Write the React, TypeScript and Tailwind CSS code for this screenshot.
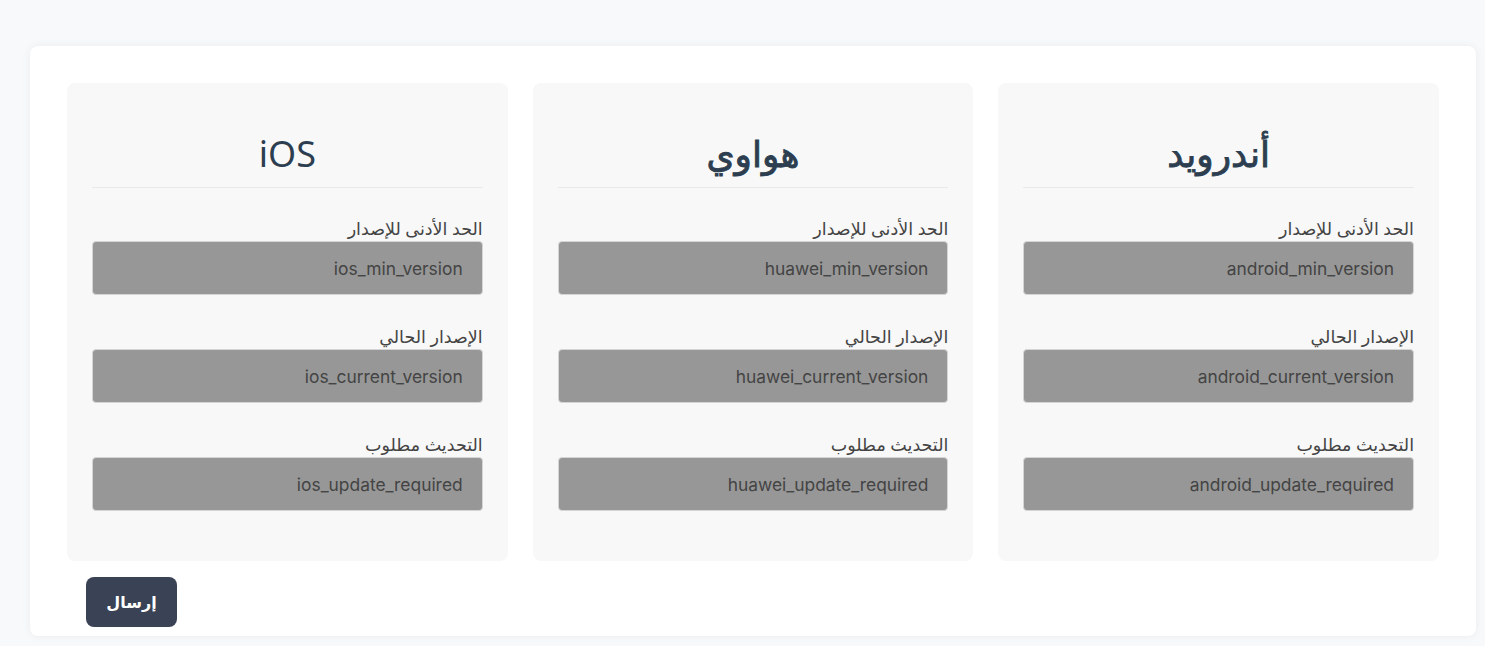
const platforms = [
  { title: "أندرويد", key: "android", latin: false },
  { title: "هواوي", key: "huawei", latin: false },
  { title: "iOS", key: "ios", latin: true },
];

const fields = [
  { label: "الحد الأدنى للإصدار", suffix: "min_version" },
  { label: "الإصدار الحالي", suffix: "current_version" },
  { label: "التحديث مطلوب", suffix: "update_required" },
];

function PlatformColumn({
  title,
  keyName,
  latin,
}: {
  title: string;
  keyName: string;
  latin: boolean;
}) {
  return (
    <div className="rounded-lg bg-[#f8f8f8] px-[25px] pt-[25px] pb-[50px]">
      <div className="border-b border-[#e9e9e9] pb-[4px] text-center">
        <h2
          className={`h-[75px] pt-[16px] text-[36px] leading-[60px] font-normal text-[#2c3e50] ${
            latin ? "" : "[-webkit-text-stroke:0.9px_#2c3e50]"
          }`}
        >
          {title}
        </h2>
      </div>
      <div className="mt-[29px] flex flex-col gap-[30px]">
        {fields.map((f) => (
          <div key={f.suffix} className="flex flex-col">
            <label className="h-[24px] text-[17.5px] font-medium leading-[22px] text-[#444]">
              {f.label}
            </label>
            <input
              readOnly
              value={`${keyName}_${f.suffix}`}
              className="h-[54px] w-full rounded border border-[#d5d5d5] bg-[#979797] px-[19px] text-right text-[17.4px] text-[#444] outline-none [font-family:Inter,sans-serif]"
            />
          </div>
        ))}
      </div>
    </div>
  );
}

export default function App() {
  return (
    <div
      dir="rtl"
      className="min-h-[646px] bg-[#f8f9fb] pt-[46px] pr-[9px] pl-[30px] [font-family:'Noto_Sans','DejaVu_Sans',sans-serif]"
    >
      <div className="rounded-lg bg-white px-[37px] pt-[37px] pb-[9px] shadow-[0_0_10px_rgba(0,0,0,0.06)]">
        <div className="grid grid-cols-3 gap-[25px]">
          {platforms.map((p) => (
            <PlatformColumn key={p.key} title={p.title} keyName={p.key} latin={p.latin} />
          ))}
        </div>
        <div className="mt-[16px] flex justify-end pl-[19px]">
          <button className="h-[50px] w-[91px] rounded-lg bg-[#3a4255] text-[16px] font-bold text-white">
            إرسال
          </button>
        </div>
      </div>
    </div>
  );
}
